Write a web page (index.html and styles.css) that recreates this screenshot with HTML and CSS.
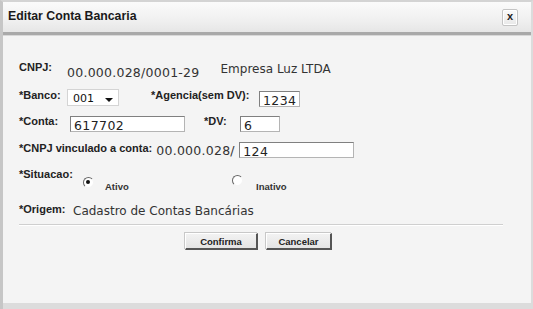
FILE: index.html
```html
<!DOCTYPE html>
<html lang="pt">
<head>
    <meta charset="UTF-8">
    <title>Editar Conta Bancaria</title>
    <link rel="stylesheet" href="styles.css">
</head>
<body>
    <div id="dialog">
        <div id="header">
            <span id="title">Editar Conta Bancaria</span>
            <a id="close-btn" role="button">x</a>
        </div>
        <div id="content">
            <div class="row row-cnpj">
                <span class="label w48">CNPJ:</span>
                <span class="value mono">00.000.028/0001-29</span>
                <span class="value empresa">Empresa Luz LTDA</span>
            </div>
            <div class="row row-banco">
                <span class="label w48">*Banco:</span>
                <span class="select"><span class="select-text">001</span><span class="arrow"></span></span>
                <span class="label agencia">*Agencia(sem DV):</span>
                <span class="input w41">1234</span>
            </div>
            <div class="row row-conta">
                <span class="label w51">*Conta:</span>
                <span class="input w115">617702</span>
                <span class="label dv">*DV:</span>
                <span class="input w40">6</span>
            </div>
            <div class="row row-vinc">
                <span class="label">*CNPJ vinculado a conta:</span>
                <span class="value mono vinc">00.000.028/</span>
                <span class="input w115">124</span>
            </div>
            <div class="row row-situacao">
                <span class="label w64">*Situacao:</span>
                <span class="radio checked"></span>
                <span class="radio-label first">Ativo</span>
                <span class="radio second"></span>
                <span class="radio-label">Inativo</span>
            </div>
            <div class="row row-origem">
                <span class="label w54">*Origem:</span>
                <span class="value">Cadastro de Contas Bancárias</span>
            </div>
            <div class="separator"></div>
            <div class="buttons">
                <a class="btn btn-confirma" role="button">Confirma</a>
                <a class="btn btn-cancelar" role="button">Cancelar</a>
            </div>
        </div>
        <div id="footer"></div>
    </div>
</body>
</html>
```
FILE: styles.css
```css
:root {
    --bg-color: #f4f4f4;
    --label-color: #222;
    --value-color: #333;
    --edge-color: #c6c6c6;
}

body {
    margin: 0;
    padding: 0;
    background-color: #d8d8d8;
    font-family: "DejaVu Sans", sans-serif;
}

#dialog {
    box-sizing: border-box;
    width: 533px;
    height: 309px;
    display: flex;
    flex-direction: column;
    border-left: 3px solid var(--edge-color);
    border-right: 2px solid #dcdcdc;
    border-top: 2px solid #d4d4d4;
    background-color: var(--bg-color);
}

#header {
    box-sizing: border-box;
    height: 33px;
    display: flex;
    align-items: center;
    justify-content: space-between;
    padding: 0 13px 2px 5px;
    background: linear-gradient(#fbfbfb, #f0f0f0 60%, #e6e6e6);
    border-bottom: 3px solid #a9a9a9;
    box-shadow: 0 1px 0 #d8d8d8;
}

#title {
    font-family: "Liberation Sans", sans-serif;
    font-weight: bold;
    font-size: 12.3px;
    color: #1a1a1a;
}

#close-btn {
    box-sizing: border-box;
    width: 16px;
    height: 17px;
    display: flex;
    align-items: center;
    justify-content: center;
    border: 1px solid #c4c4c4;
    border-radius: 2px;
    background: linear-gradient(#fafafa, #e8e8e8);
    box-shadow: inset 0 0 0 1px #fff;
    font-family: "Liberation Sans", sans-serif;
    font-weight: bold;
    font-size: 11px;
    color: #222;
    padding-bottom: 2px;
    margin-top: 2px;
}

#content {
    flex: 1;
    padding: 25px 25px 0 16px;
}

.row {
    display: flex;
    align-items: center;
}

.label {
    font-family: "Liberation Sans", sans-serif;
    font-weight: bold;
    font-size: 11px;
    color: var(--label-color);
    flex: none;
}

.value {
    font-size: 12px;
    color: var(--value-color);
}

.mono {
    font-size: 12.5px;
    letter-spacing: 0.25px;
}

.w48 { width: 48px; }
.w51 { width: 51px; }
.w54 { width: 54px; }
.w64 { width: 64px; }

.row-cnpj {
    height: 20px;
}

.row-cnpj .label {
    margin-top: -6px;
}

.row-cnpj .mono {
    margin-top: 4px;
}

.empresa {
    margin-left: 21px;
    margin-top: -3px;
    font-size: 12px;
}

.row-banco {
    height: 22px;
    margin-top: 6px;
}

.row-banco .label {
    margin-top: -4px;
}

.select {
    box-sizing: border-box;
    width: 52px;
    height: 17px;
    display: flex;
    align-items: center;
    justify-content: space-between;
    padding: 1px 5px 0 5px;
    background-color: #fff;
    border: 1px solid #d4d4d4;
    font-size: 11px;
    color: #111;
    margin-top: 1px;
}

.arrow {
    width: 0;
    height: 0;
    border-left: 4px solid transparent;
    border-right: 4px solid transparent;
    border-top: 4px solid #111;
    margin-top: 3px;
}

.agencia {
    margin-left: 32px;
    width: 108px;
}

.input {
    box-sizing: border-box;
    height: 16px;
    display: block;
    overflow: hidden;
    padding: 2px 0 0 3px;
    background-color: #fff;
    border: 1px solid #808080;
    border-right-color: #b4b4b4;
    border-bottom-color: #b4b4b4;
    font-size: 12.5px;
    line-height: 14px;
    letter-spacing: 0.4px;
    color: #222;
}

.row-banco .input {
    margin-top: 4px;
}

.w40 { width: 40px; }
.w41 { width: 41px; }
.w115 { width: 115px; }

.row-conta {
    height: 22px;
    margin-top: 4px;
}

.row-conta .label {
    margin-top: -4px;
}

.row-conta .input {
    margin-top: 2px;
}

.dv {
    margin-left: 19px;
    width: 36px;
}

.row-vinc {
    height: 22px;
    margin-top: 4px;
}

.row-vinc .label {
    margin-top: -3px;
}

.vinc {
    margin-left: 4px;
    margin-top: 2px;
    width: 83px;
}

.row-vinc .input {
    margin-top: 2px;
}

.row-situacao {
    height: 28px;
    margin-top: 4px;
    align-items: flex-start;
}

.row-situacao .label {
    margin-top: 4px;
}

.radio {
    box-sizing: border-box;
    width: 11px;
    height: 11px;
    margin-top: 13px;
    border-radius: 50%;
    border: 1px solid #f4f4f4;
    border-top-color: #666;
    border-left-color: #666;
    background-color: #fff;
    position: relative;
    flex: none;
}

.radio.checked::after {
    content: "";
    position: absolute;
    left: 2px;
    top: 2px;
    width: 4px;
    height: 4px;
    border-radius: 50%;
    background-color: #111;
}

.radio.second {
    margin-top: 11px;
}

.radio-label {
    font-family: "Liberation Sans", sans-serif;
    font-weight: bold;
    font-size: 9.5px;
    color: #333;
    margin-top: 17px;
    margin-left: 13px;
}

.radio-label.first {
    margin-left: 11px;
    width: 127px;
}

.row-origem {
    height: 20px;
    margin-top: 8px;
}

.row-origem .label {
    margin-top: -3px;
}

.row-origem .value {
    margin-top: 2px;
}

.separator {
    margin-top: 4px;
    height: 1px;
    background-color: #cfcfcf;
    border-bottom: 1px solid #fff;
    margin-right: 3px;
}

.buttons {
    display: flex;
    gap: 8px;
    margin-top: 7px;
    padding-left: 166px;
}

.btn {
    box-sizing: border-box;
    height: 17px;
    display: flex;
    align-items: center;
    justify-content: center;
    background: linear-gradient(#f2f2f2, #e4e4e4);
    border: 1px solid #fff;
    border-right: 2px solid #555;
    border-bottom: 2px solid #555;
    box-shadow: -1px -1px 0 #c8c8c8;
    font-family: "Liberation Sans", sans-serif;
    font-size: 9.5px;
    font-weight: bold;
    color: #222;
    cursor: pointer;
}

.btn-confirma {
    width: 73px;
}

.btn-cancelar {
    width: 66px;
}

#footer {
    height: 6px;
    background-color: #dcdcdc;
}
```
